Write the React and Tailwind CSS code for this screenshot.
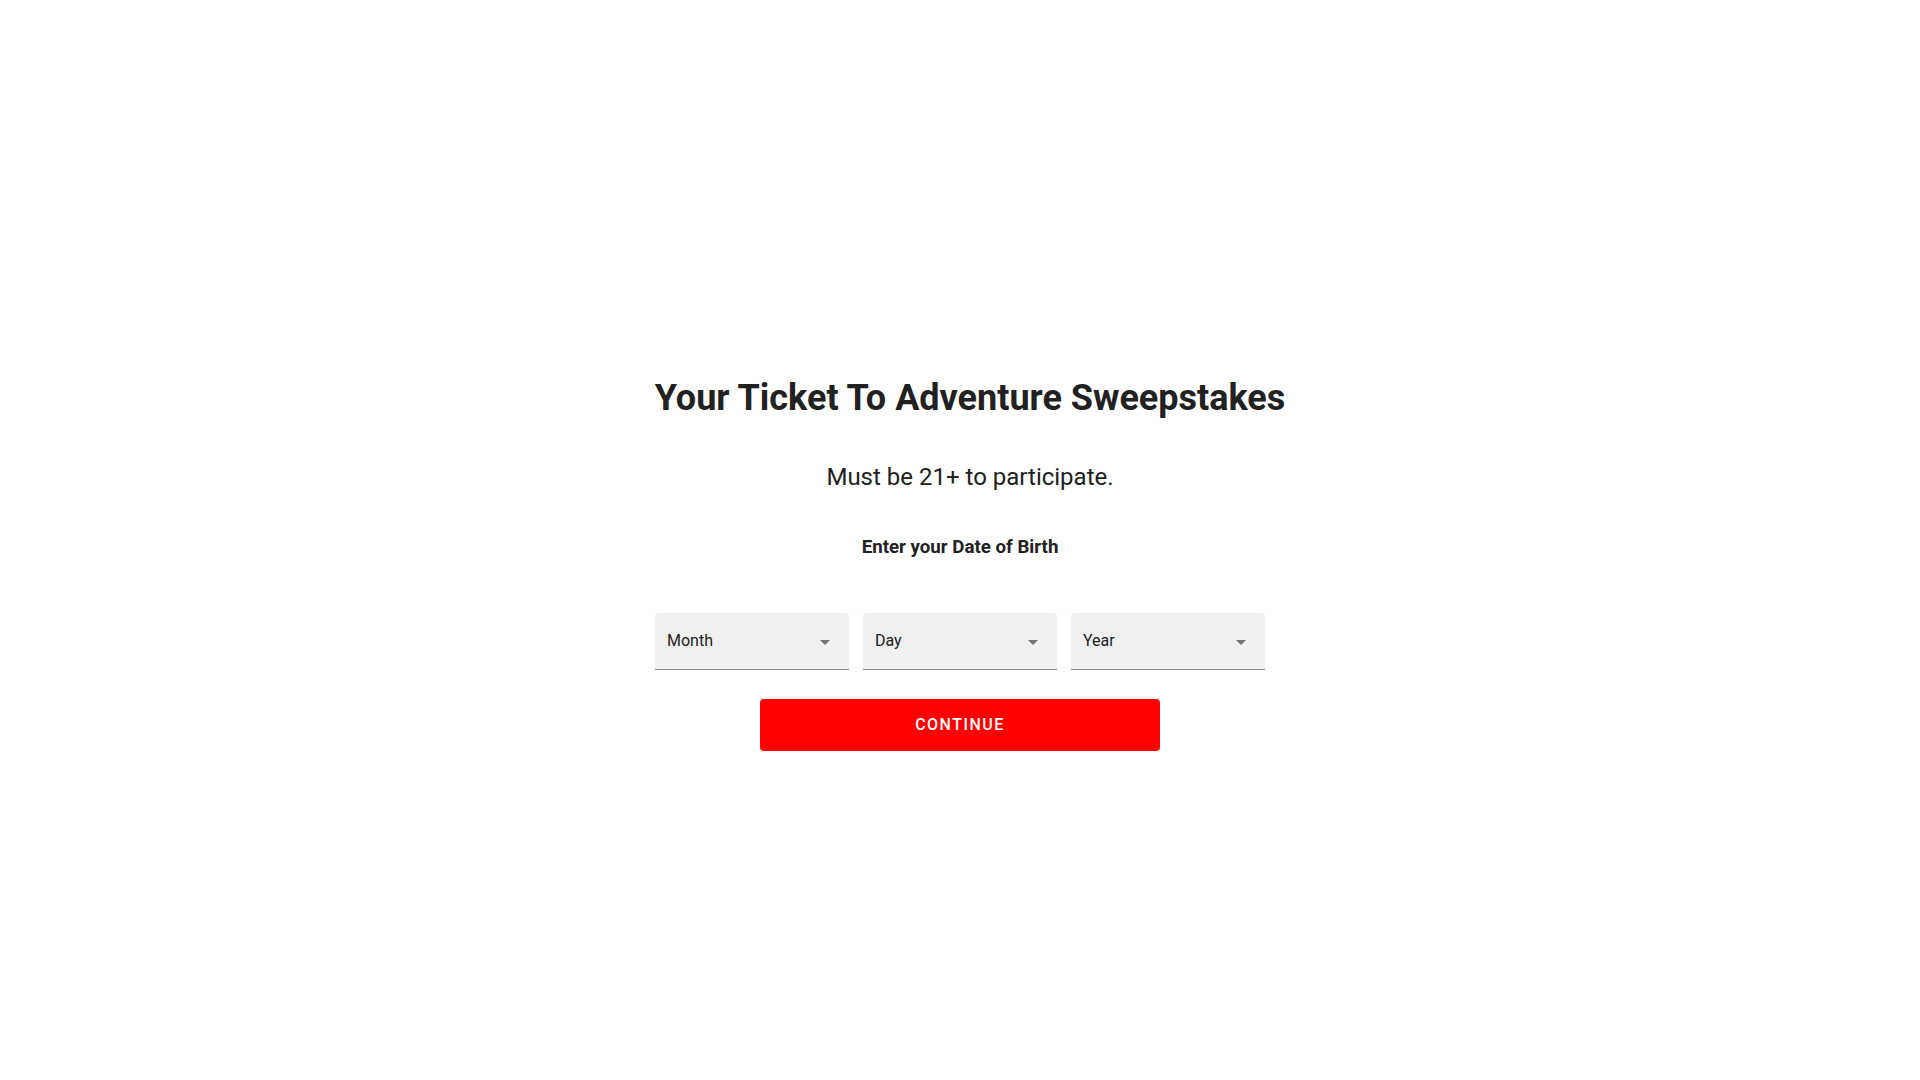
import React, { useState } from 'react';

const fields = ['Month', 'Day', 'Year'];

const SelectBox = ({ label }) => (
  <div className="relative w-[194px] h-[57px] bg-[#f0f0f0] rounded-t-[4px] border-b border-[#8c8c8c] flex items-center justify-between pl-[12px] pr-[19px] cursor-pointer">
    <span className="text-[16px] text-[#212121]">{label}</span>
    <svg width="10" height="5" viewBox="0 0 10 5" className="mt-[3px]">
      <path d="M0 0 L5 5 L10 0 Z" fill="#757575" />
    </svg>
  </div>
);

const App = () => {
  const [dob] = useState({ month: '', day: '', year: '' });

  return (
    <div
      className="min-h-screen bg-white flex flex-col items-center pt-[376px] text-[#212121]"
      style={{ fontFamily: 'Roboto, "Noto Sans", sans-serif' }}
    >
      {/* Heading */}
      <h1 className="text-[36px] leading-[44px] font-bold pl-[20px]">
        Your Ticket To Adventure Sweepstakes
      </h1>
      <p className="mt-[41px] text-[24px] leading-[32px] font-normal pl-[20px]">
        Must be 21+ to participate.
      </p>
      <p className="mt-[42px] text-[18.7px] leading-[24px] font-bold">
        Enter your Date of Birth
      </p>

      {/* Date of birth selects */}
      <div className="mt-[54px] flex gap-[14px]">
        {fields.map((f) => (
          <SelectBox key={f} label={f} value={dob[f.toLowerCase()]} />
        ))}
      </div>

      <button className="mt-[29px] w-[400px] h-[52px] bg-[#ff0000] rounded-[4px] text-white text-[16px] font-medium tracking-[1.5px] uppercase">
        Continue
      </button>
    </div>
  );
};

export default App;
